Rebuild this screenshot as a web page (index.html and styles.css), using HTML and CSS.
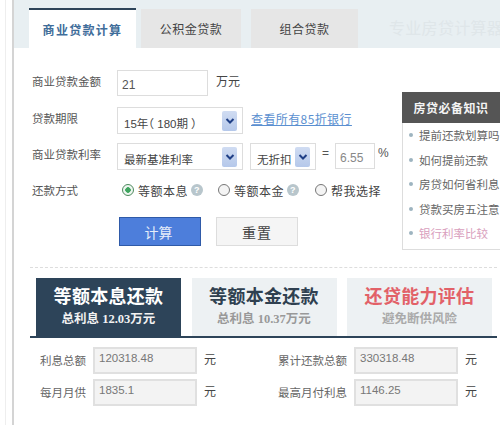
FILE: index.html
```html
<!DOCTYPE html>
<html lang="zh">
<head>
<meta charset="utf-8">
<title>商业贷款计算</title>
<link rel="stylesheet" href="styles.css">
</head>
<body>
<div class="page">
  <div class="gutter"></div>
  <main class="main">
    <nav class="tabs">
      <div class="tab active">商业贷款计算</div>
      <div class="tab t2">公积金贷款</div>
      <div class="tab t3">组合贷款</div>
      <div class="slogan">专业房贷计算器</div>
    </nav>
    <section class="upper">
      <form class="form">
        <div class="row r1">
          <span class="label">商业贷款金额</span>
          <span class="field w91">21</span>
          <span class="unit">万元</span>
        </div>
        <div class="row r2">
          <span class="label">贷款期限</span>
          <span class="select w126"><span class="val">15年（ 180期 ）</span><span class="arrow"><svg viewBox="0 0 10 8" width="10" height="8"><path d="M1.5 2 L5 5.5 L8.500 2" fill="none" stroke="#1f3f86" stroke-width="2"/></svg></span></span>
          <a class="link" href="#">查看所有85折银行</a>
        </div>
        <div class="row r3">
          <span class="label">商业贷款利率</span>
          <span class="select w126"><span class="val">最新基准利率</span><span class="arrow"><svg viewBox="0 0 10 8" width="10" height="8"><path d="M1.5 2 L5 5.5 L8.500 2" fill="none" stroke="#1f3f86" stroke-width="2"/></svg></span></span>
          <span class="select w66"><span class="val">无折扣</span><span class="arrow"><svg viewBox="0 0 10 8" width="10" height="8"><path d="M1.5 2 L5 5.5 L8.500 2" fill="none" stroke="#1f3f86" stroke-width="2"/></svg></span></span>
          <span class="eq">=</span>
          <span class="field w40 grayval">6.55</span>
          <span class="pct">%</span>
        </div>
        <div class="row r4">
          <span class="label">还款方式</span>
          <span class="radios">
            <span class="radio on"><i class="dot"></i>等额本息<b class="help">?</b></span>
            <span class="radio"><i class="dot"></i>等额本金<b class="help">?</b></span>
            <span class="radio"><i class="dot"></i>帮我选择</span>
          </span>
        </div>
        <div class="actions">
          <button type="button" class="btn calc">计算</button>
          <button type="button" class="btn reset">重置</button>
        </div>
      </form>
      <aside class="know">
        <h3>房贷必备知识</h3>
        <ul>
          <li>提前还款划算吗</li>
          <li>如何提前还款</li>
          <li>房贷如何省利息</li>
          <li>贷款买房五注意</li>
          <li class="pink">银行利率比较</li>
        </ul>
      </aside>
    </section>
    <section class="lower">
      <div class="modes">
        <div class="mode sel"><strong>等额本息还款</strong><small>总利息 12.03万元</small></div>
        <div class="mode"><strong>等额本金还款</strong><small>总利息 10.37万元</small></div>
        <div class="mode red"><strong>还贷能力评估</strong><small>避免断供风险</small></div>
      </div>
      <div class="results">
        <span class="rl">利息总额</span><span class="rv">120318.48</span><span class="ru">元</span>
        <span class="rl">累计还款总额</span><span class="rv">330318.48</span><span class="ru">元</span>
        <span class="rl">每月月供</span><span class="rv">1835.1</span><span class="ru">元</span>
        <span class="rl">最高月付利息</span><span class="rv">1146.25</span><span class="ru">元</span>
      </div>
    </section>
  </main>
</div>
</body>
</html>
```
FILE: styles.css
```css
* { box-sizing: border-box; }
html, body { margin: 0; padding: 0; }
body {
  width: 500px;
  height: 425px;
  overflow: hidden;
  background: #fff;
  font-family: "Noto Sans CJK SC", "Liberation Sans", sans-serif;
  font-size: 12px;
  color: #555;
}
.page { display: flex; width: 500px; height: 425px; }
.gutter {
  flex: 0 0 14px;
  background: linear-gradient(90deg, #fff 0 5px, #eee 5px 6px, #fff 6px 12px, #d4d4d4 12px 14px);
}
.main { flex: 1; min-width: 0; overflow: hidden; }

.tabs {
  display: flex;
  align-items: flex-end;
  height: 48px;
  background: #e8eff2;
  padding-left: 15px;
}
.tab {
  flex: none;
  height: 39px;
  background: #e6e6e6;
  color: #444;
  font-size: 12px;
  letter-spacing: 0.5px;
  display: flex;
  align-items: center;
  justify-content: center;
}
.tab.active {
  width: 107px;
  height: 40px;
  background: #fff;
  border-top: 2px solid #2d4459;
  color: #3f6d9a;
  font-weight: 700;
  letter-spacing: 1.3px;
}
.t2 { width: 100px; margin-left: 5px; }
.t3 { width: 107px; margin-left: 10px; }
.slogan {
  flex: none;
  margin-left: 31px;
  align-self: center;
  white-space: nowrap;
  font-size: 16px;
  color: #dfe6e9;
  letter-spacing: 0.3px;
  padding-top: 6px;
}

.upper { display: flex; height: 219px; }
.form { width: 388px; flex: none; padding: 22px 0 0 18px; }
.row { display: flex; align-items: flex-start; color: #555; }
.r1 { height: 37px; }
.r2 { height: 36px; }
.r3 { height: 36px; }
.r4 { height: 38px; }
.label { width: 85px; flex: none; font-size: 11.500px; line-height: 23px; color: #555; }
.field {
  height: 26px;
  border: 1px solid #ddd;
  background: #fff;
  font-family: "Liberation Sans", sans-serif;
  font-size: 12px;
  line-height: 28px;
  padding-left: 4px;
  color: #555;
}
.w91 { width: 91px; }
.w40 { width: 40px; margin-left: 6px; }
.grayval { color: #888; }
.unit { margin-left: 8px; font-size: 12px; line-height: 22px; color: #444; }
.select {
  height: 27px;
  border: 1px solid #ddd;
  display: flex;
  align-items: center;
  padding: 0 5px 0 6px;
  justify-content: space-between;
  background: #fff;
  color: #444;
}
.w126 { width: 126px; }
.w66 { width: 66px; margin-left: 7px; }
.val {
  font-size: 11.500px;
  white-space: nowrap;
  padding-top: 4px;
  font-family: "Liberation Sans", "Noto Sans CJK SC", sans-serif;
  font-feature-settings: "halt";
}
.arrow {
  width: 15px;
  height: 20px;
  background: linear-gradient(180deg, #d0dcf2, #b5c8ea);
  border-radius: 2px;
  display: flex;
  align-items: center;
  justify-content: center;
  flex: none;
}
.link {
  margin-left: 8px;
  color: #5a8fd0;
  font-size: 12px;
  letter-spacing: 0.4px;
  line-height: 24px;
  text-decoration: underline;
}
.eq { margin-left: 6px; font-size: 12px; line-height: 20px; color: #555; font-family: "Liberation Sans", sans-serif; }
.pct { margin-left: 3px; font-size: 12px; line-height: 20px; color: #555; font-family: "Liberation Sans", sans-serif; }
.radios { display: flex; margin-left: 5px; gap: 15px; }
.radio {
  display: inline-flex;
  align-items: center;
  font-size: 12px;
  letter-spacing: 0.5px;
  color: #444;
  height: 22px;
  white-space: nowrap;
}
.radio:nth-child(3) { margin-left: 1px; }
.dot {
  width: 12px;
  height: 12px;
  border: 1px solid #777;
  border-radius: 50%;
  margin-right: 4px;
  background: #f4f4f4;
  flex: none;
}
.on .dot { border-color: #4d8a5e; background: radial-gradient(circle, #3fa55f 0 2.500px, #eef6f0 3px); }
.help {
  width: 12px;
  height: 12px;
  border-radius: 50%;
  margin-left: 3px;
  background: #b8c6cc;
  color: #fff;
  font: 700 9px/12px "Liberation Sans", sans-serif;
  text-align: center;
}
.actions { display: flex; margin-left: 87px; }
.btn {
  height: 29px;
  font-family: inherit;
  font-size: 14px;
  padding: 0;
}
.calc {
  width: 82px;
  background: #4d7edb;
  border: 1px solid #2f5aa8;
  color: #e6edf9;
  padding-right: 3px;
}
.reset {
  width: 82px;
  margin-left: 15px;
  background: #f5f5f5;
  border: 1px solid #ddd;
  color: #444;
  letter-spacing: 1px;
}
.know {
  margin-top: 44px;
  width: 98px;
  height: 158px;
  flex: none;
  border: 1px solid #ddd;
  border-right: 0;
}
.know h3 {
  margin: -1px 0 0 -1px;
  height: 31px;
  background: #555;
  color: #f4f4f4;
  font-size: 12px;
  letter-spacing: 0.5px;
  font-weight: 700;
  line-height: 31px;
  text-align: center;
}
.know ul { list-style: none; margin: 0; padding: 0 0 0 6px; }
.know li {
  position: relative;
  padding-left: 10px;
  height: 24.500px;
  line-height: 24.500px;
  font-size: 11.500px;
  color: #666;
  white-space: nowrap;
  overflow: hidden;
}
.know li::before {
  content: "";
  position: absolute;
  left: 0;
  top: 10px;
  width: 4px;
  height: 4px;
  border-radius: 50%;
  background: #9db4c0;
}
.know li.pink { color: #d9a0bd; }

.lower { margin-left: 16px; width: 467px; border-top: 1px dashed #ddd; padding-top: 10px; }
.modes {
  display: flex;
  gap: 10.500px;
  padding-left: 6px;
  border-bottom: 2px solid #2d4459;
  height: 60px;
}
.mode {
  width: 145px;
  height: 58px;
  background: #edf1f3;
  text-align: center;
  color: #2f4050;
  display: flex;
  flex-direction: column;
  align-items: center;
}
.mode strong { font-size: 18px; line-height: 24px; margin-top: 5px; font-weight: 700; letter-spacing: 0.3px; }
.mode small {
  font-family: "Liberation Serif", "Noto Sans CJK SC", serif;
  font-size: 12.500px;
  line-height: 14px;
  margin-top: 5px;
  font-weight: 700;
  color: #999;
}
.mode.sel { background: #2d4459; color: #fff; }
.mode.sel small { color: #f2f2f2; }
.mode.red { color: #e26168; }
.mode.red small { color: #aaa; }
.results {
  display: grid;
  grid-template-columns: 63px 104px 22px 135px 104px auto;
  row-gap: 5px;
  margin-top: 9px;
  align-items: center;
}
.rl { font-size: 11.500px; color: #666; text-align: right; line-height: 25px; white-space: nowrap; padding-right: 7px; }
.rv {
  height: 27px;
  background: #f3f3f3;
  border: 2px solid #e0e0e0;
  font-family: "Liberation Sans", sans-serif;
  font-size: 11.500px;
  line-height: 18px;
  padding-left: 4px;
  color: #777;
}
.ru { font-size: 12px; line-height: 22px; color: #444; padding-left: 7px; padding-bottom: 3px; }
```
